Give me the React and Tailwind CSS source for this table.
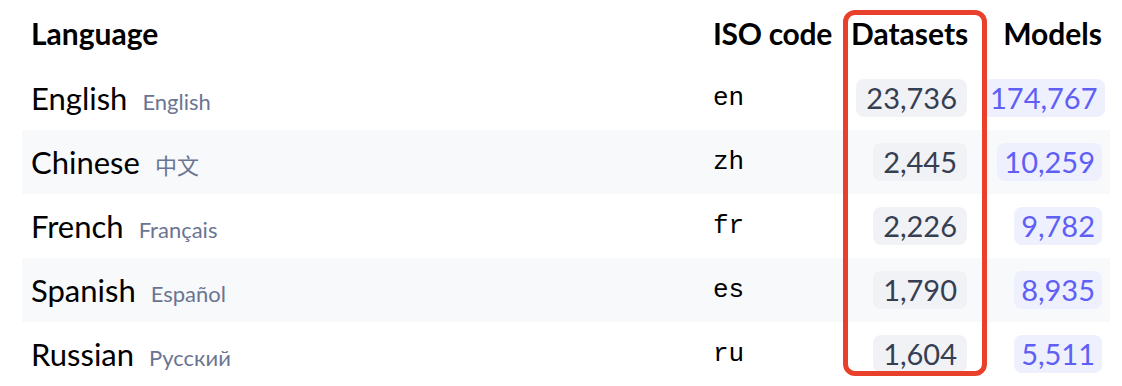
const rows = [
  { name: "English", native: "English", code: "en", datasets: "23,736", models: "174,767" },
  { name: "Chinese", native: "中文", code: "zh", datasets: "2,445", models: "10,259" },
  { name: "French", native: "Français", code: "fr", datasets: "2,226", models: "9,782" },
  { name: "Spanish", native: "Español", code: "es", datasets: "1,790", models: "8,935" },
  { name: "Russian", native: "Русский", code: "ru", datasets: "1,604", models: "5,511" },
];

export default function App() {
  return (
    <div className="relative w-[1122px] h-[386px] bg-white overflow-hidden font-['Lato','Noto_Sans_CJK_SC',sans-serif]">
      <div className="pl-[22px] pr-[12px]">
        <table className="table-fixed w-[1088px] border-collapse">
          <colgroup>
            <col className="w-[683px]" />
            <col className="w-[138px]" />
            <col className="w-[132px]" />
            <col className="w-[135px]" />
          </colgroup>
          <thead>
            <tr className="h-[66px] text-[30px] font-bold text-black">
              <th className="text-left px-[9px] font-bold">Language</th>
              <th className="text-left px-[8px] font-bold whitespace-nowrap tracking-[-0.3px]">ISO code</th>
              <th className="text-right px-[8px] font-bold">Datasets</th>
              <th className="text-right px-[8px] font-bold">Models</th>
            </tr>
          </thead>
          <tbody>
            {rows.map((r, i) => (
              <tr key={r.code} className={`h-16 ${i % 2 === 1 ? "bg-[#f8f9fb]" : "bg-white"}`}>
                <td className="px-[9px] whitespace-nowrap">
                  <span className="text-[31px] text-black">{r.name}</span>
                  <span className="ml-[15px] text-[22px] text-[#6b7592]">{r.native}</span>
                </td>
                <td className="px-[8px] font-['Liberation_Mono',monospace] text-[26px] text-black">{r.code}</td>
                <td className="px-[8px] text-right">
                  <span className="inline-block rounded-lg bg-[#f1f2f6] px-[10px] h-[38px] leading-[38px] text-[29px] text-[#363e52]">
                    {r.datasets}
                  </span>
                </td>
                <td className="px-[8px] text-right">
                  <span className="inline-block rounded-lg bg-[#eef0fd] px-[7px] h-[38px] leading-[38px] text-[29px] text-[#5f5ff6]">
                    {r.models}
                  </span>
                </td>
              </tr>
            ))}
          </tbody>
        </table>
      </div>
      {/* highlight box around the Datasets column */}
      <div className="absolute left-[843px] top-[10px] w-[144px] h-[366px] rounded-[12px] border-[5px] border-[#e8402a] pointer-events-none" />
    </div>
  );
}
